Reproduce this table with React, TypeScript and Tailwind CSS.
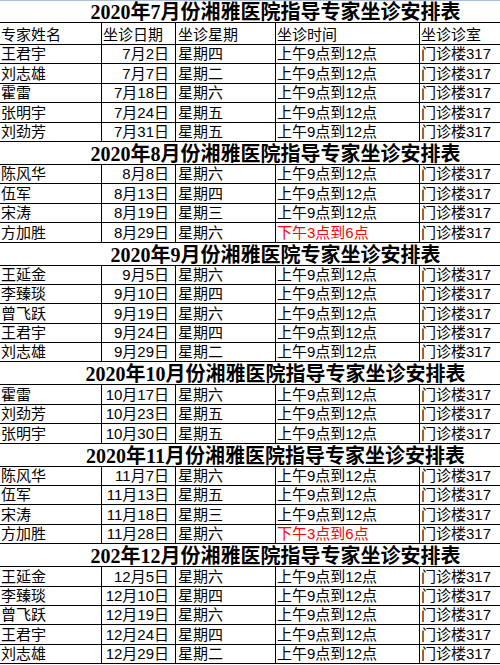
import React from 'react';

type Row = [string, string, string, string, string];

interface Section {
  title: string;
  header?: boolean;
  rows: Row[];
}

const AM = '上午9点到12点';
const PM = '下午3点到6点';
const ROOM = '门诊楼317';

const sections: Section[] = [
  {
    title: '2020年7月份湘雅医院指导专家坐诊安排表',
    header: true,
    rows: [
      ['王君宇', '7月2日', '星期四', AM, ROOM],
      ['刘志雄', '7月7日', '星期二', AM, ROOM],
      ['霍雷', '7月18日', '星期六', AM, ROOM],
      ['张明宇', '7月24日', '星期五', AM, ROOM],
      ['刘劲芳', '7月31日', '星期五', AM, ROOM],
    ],
  },
  {
    title: '2020年8月份湘雅医院指导专家坐诊安排表',
    rows: [
      ['陈风华', '8月8日', '星期六', AM, ROOM],
      ['伍军', '8月13日', '星期四', AM, ROOM],
      ['宋涛', '8月19日', '星期三', AM, ROOM],
      ['方加胜', '8月29日', '星期六', PM, ROOM],
    ],
  },
  {
    title: '2020年9月份湘雅医院专家坐诊安排表',
    rows: [
      ['王延金', '9月5日', '星期六', AM, ROOM],
      ['李臻琰', '9月10日', '星期四', AM, ROOM],
      ['曾飞跃', '9月19日', '星期六', AM, ROOM],
      ['王君宇', '9月24日', '星期四', AM, ROOM],
      ['刘志雄', '9月29日', '星期二', AM, ROOM],
    ],
  },
  {
    title: '2020年10月份湘雅医院指导专家坐诊安排表',
    rows: [
      ['霍雷', '10月17日', '星期六', AM, ROOM],
      ['刘劲芳', '10月23日', '星期五', AM, ROOM],
      ['张明宇', '10月30日', '星期五', AM, ROOM],
    ],
  },
  {
    title: '2020年11月份湘雅医院指导专家坐诊安排表',
    rows: [
      ['陈风华', '11月7日', '星期六', AM, ROOM],
      ['伍军', '11月13日', '星期五', AM, ROOM],
      ['宋涛', '11月18日', '星期三', AM, ROOM],
      ['方加胜', '11月28日', '星期六', PM, ROOM],
    ],
  },
  {
    title: '202年12月份湘雅医院指导专家坐诊安排表',
    rows: [
      ['王延金', '12月5日', '星期六', AM, ROOM],
      ['李臻琰', '12月10日', '星期四', AM, ROOM],
      ['曾飞跃', '12月19日', '星期六', AM, ROOM],
      ['王君宇', '12月24日', '星期四', AM, ROOM],
      ['刘志雄', '12月29日', '星期二', AM, ROOM],
    ],
  },
];

const cell =
  'flex shrink-0 items-end overflow-hidden whitespace-nowrap border-black pb-[1px] leading-[17px]';

const DataRow: React.FC<{ row: Row; tall?: boolean; header?: boolean }> = ({ row, tall, header }) => {
  const [name, date, day, time, room] = row;
  return (
    <div className={`flex border-b border-black ${tall ? 'h-[22px]' : 'h-[19.4px]'}`}>
      <div className={`${cell} w-[102px] border-r pl-[1px]`}>{name}</div>
      <div className={`${cell} w-[74px] border-r ${header ? 'pl-[1px]' : 'justify-end pr-[6px]'}`}>{date}</div>
      <div className={`${cell} w-[100px] border-r pl-[2px]`}>{day}</div>
      <div className={`${cell} w-[144px] border-r pl-[1px] ${time.startsWith('下午') ? 'text-[#ff0000]' : ''}`}>
        {time}
      </div>
      <div className={`${cell} w-[131px] pl-[1px]`}>{room}</div>
    </div>
  );
};

export default function App() {
  return (
    <div className="h-[665px] w-[500px] overflow-hidden bg-white font-['Liberation_Sans','Noto_Sans_CJK_SC',sans-serif] text-[15px] text-black">
      <div className="h-px bg-[#aabdd6]" />
      <div className="w-[551px]">
        {sections.map((s, i) => (
          <div key={s.title}>
            <div
              className={`flex items-end justify-center border-b border-black font-['Liberation_Serif','Noto_Sans_CJK_SC',serif] text-[20px] font-bold leading-[20px] ${
                i === 0 ? 'h-[22px]' : 'h-[23px]'
              }`}
            >
              {s.title}
            </div>
            {s.header && <DataRow row={['专家姓名', '坐诊日期', '坐诊星期', '坐诊时间', '坐诊诊室']} tall header />}
            {s.rows.map((r, j) => (
              <DataRow key={j} row={r} />
            ))}
          </div>
        ))}
      </div>
    </div>
  );
}
